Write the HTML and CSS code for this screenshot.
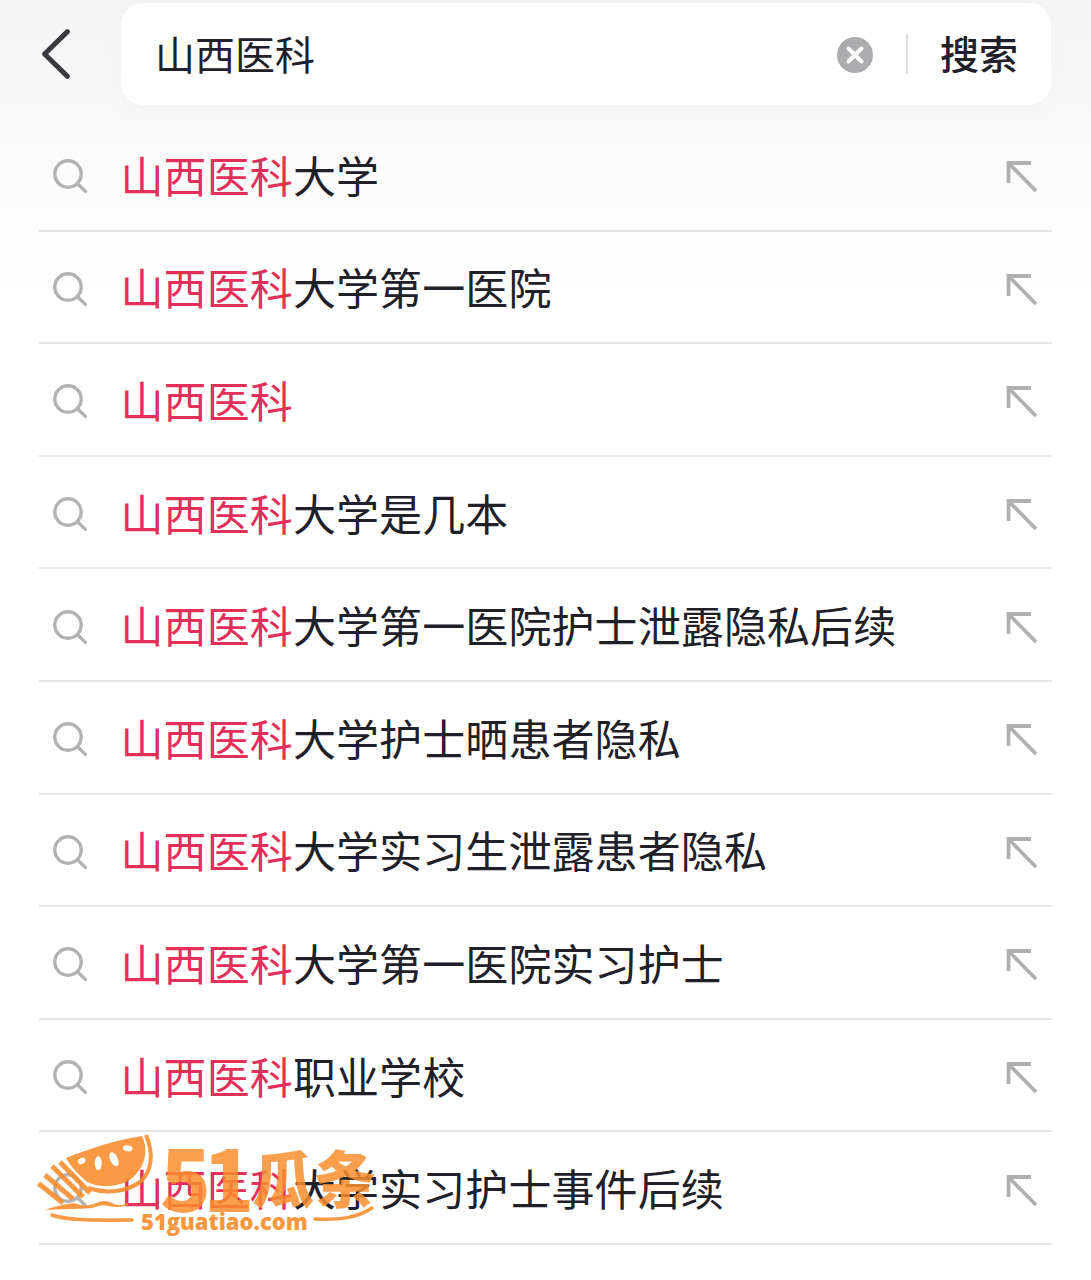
FILE: index.html
```html
<!DOCTYPE html>
<html lang="zh-CN">
<head>
<meta charset="utf-8">
<title>山西医科</title>
<link rel="stylesheet" href="styles.css">
</head>
<body>
<svg class="defs" width="0" height="0" aria-hidden="true">
  <symbol id="i-search" viewBox="0 0 36 36"><circle cx="16" cy="16" r="13.2" fill="none" stroke="#b2b2b3" stroke-width="3.4"/><path d="M26 26.2l7.4 7.2" fill="none" stroke="#b2b2b3" stroke-width="3.4" stroke-linecap="round"/></symbol>
  <symbol id="i-arrow" viewBox="0 0 34 34"><path d="M26 3H3.500v20M4 3.500L31 31" fill="none" stroke="#b0b0b1" stroke-width="3.800"/></symbol>
</svg>
<div class="page">
  <header class="top">
    <svg class="back" viewBox="0 0 30 50" aria-hidden="true"><path d="M26 3.500L4 25l22 21.500" fill="none" stroke="#3a3a40" stroke-width="4.800" stroke-linecap="round" stroke-linejoin="round"/></svg>
    <div class="box">
      <span class="query">山西医科</span>
      <svg class="clear" viewBox="0 0 36 36" aria-hidden="true"><circle cx="18" cy="18" r="18" fill="#acacae"/><path d="M11.500 11.500l13 13M24.500 11.500l-13 13" stroke="#fff" stroke-width="4" stroke-linecap="round"/></svg>
      <span class="divider"></span>
      <span class="go">搜索</span>
    </div>
  </header>
  <ul class="list">
    <li class="row"><svg class="ic"><use href="#i-search"/></svg><span class="txt"><em>山西医科</em>大学</span><svg class="ar"><use href="#i-arrow"/></svg></li>
    <li class="row"><svg class="ic"><use href="#i-search"/></svg><span class="txt"><em>山西医科</em>大学第一医院</span><svg class="ar"><use href="#i-arrow"/></svg></li>
    <li class="row"><svg class="ic"><use href="#i-search"/></svg><span class="txt"><em>山西医科</em></span><svg class="ar"><use href="#i-arrow"/></svg></li>
    <li class="row"><svg class="ic"><use href="#i-search"/></svg><span class="txt"><em>山西医科</em>大学是几本</span><svg class="ar"><use href="#i-arrow"/></svg></li>
    <li class="row"><svg class="ic"><use href="#i-search"/></svg><span class="txt"><em>山西医科</em>大学第一医院护士泄露隐私后续</span><svg class="ar"><use href="#i-arrow"/></svg></li>
    <li class="row"><svg class="ic"><use href="#i-search"/></svg><span class="txt"><em>山西医科</em>大学护士晒患者隐私</span><svg class="ar"><use href="#i-arrow"/></svg></li>
    <li class="row"><svg class="ic"><use href="#i-search"/></svg><span class="txt"><em>山西医科</em>大学实习生泄露患者隐私</span><svg class="ar"><use href="#i-arrow"/></svg></li>
    <li class="row"><svg class="ic"><use href="#i-search"/></svg><span class="txt"><em>山西医科</em>大学第一医院实习护士</span><svg class="ar"><use href="#i-arrow"/></svg></li>
    <li class="row"><svg class="ic"><use href="#i-search"/></svg><span class="txt"><em>山西医科</em>职业学校</span><svg class="ar"><use href="#i-arrow"/></svg></li>
    <li class="row"><svg class="ic"><use href="#i-search"/></svg><span class="txt"><em>山西医科</em>大学实习护士事件后续</span><svg class="ar"><use href="#i-arrow"/></svg></li>
  </ul>
  <div class="mark">
    <svg class="mark-art" viewBox="0 0 340 100" aria-hidden="true">
      <path d="M30 24C55 14 80 6 106 2c6 13 5 30-12 44-14 8-34 8-44 1C42 40 35 33 30 24z" fill="#f98f2f"/>
      <path d="M110 1c8 19 6 37-6 47-14 10-34 12-52 6" fill="none" stroke="#f98f2f" stroke-width="4"/>
      <ellipse cx="45.700" cy="27" rx="4" ry="3" fill="#fff" transform="rotate(-30 45.700 27)"/>
      <ellipse cx="62.300" cy="29.300" rx="3.500" ry="7" fill="#fff"/>
      <ellipse cx="78" cy="25.300" rx="3.800" ry="7.500" fill="#fff" transform="rotate(-25 78 25.300)"/>
      <ellipse cx="91.700" cy="14.300" rx="4.800" ry="3" fill="#fff" transform="rotate(10 91.700 14.300)"/>
      <path d="M24 28l30 31M16 32l31 31M9 41l28 24M2.500 49.500L27 69" stroke="#f98f2f" stroke-width="5" fill="none"/>
      <path d="M9 76C20 72 30 70 38 69c8 3 12 3 20 1 8-4 14-4 20 0 6 2 10 1 14-1v2c-8 3-14 2-20 1-6-2-10 0-16 2-8 1-30 1-47 2z" fill="#f98f2f"/>
      <path d="M16 81c14 5 34 5.500 80 5" fill="none" stroke="#f98f2f" stroke-width="3.500" stroke-linecap="round"/>
      <path d="M279 85c24 1 42-1 57-11" fill="none" stroke="#f98f2f" stroke-width="3.500" stroke-linecap="round"/>
    </svg>
    <span class="mark-name"><span class="mark-num">51</span>瓜条</span>
    <span class="mark-url">51guatiao.com</span>
  </div>
</div>
</body>
</html>
```
FILE: styles.css
```css
* { box-sizing: border-box; }
html, body { margin: 0; padding: 0; background: #fff; }
body { font-family: "Noto Sans CJK SC", "Noto Sans", sans-serif; }
.defs { position: absolute; }
.page {
  position: relative;
  width: 1091px;
  height: 1280px;
  overflow: hidden;
  background: linear-gradient(180deg, #f5f5f6 0, #f8f8f9 120px, #fdfdfd 210px, #fff 300px);
}
.top {
  display: flex;
  align-items: center;
  height: 108px;
  padding: 0 40px 0 39px;
}
.back { width: 34px; height: 52px; flex: none; margin-right: 48px; margin-top: -1px; }
.box {
  flex: 1;
  height: 102px;
  background: #fff;
  border-radius: 22px;
  display: flex;
  align-items: center;
  padding: 0 33px 0 34px;
  box-shadow: 0 6px 24px rgba(0, 0, 0, .025);
}
.query { flex: 1; font-size: 40px; line-height: 1; color: #1f2028; margin-top: -3px; }
.clear { width: 36px; height: 36px; flex: none; margin-top: 2px; }
.divider { width: 2px; height: 40px; background: #dcdcdd; margin: 0 32px 0 33px; flex: none; }
.go { font-size: 39px; line-height: 1; font-weight: 500; color: #1f2028; margin-top: -3px; }
.list { list-style: none; margin: 0; padding: 11px 39px 0; }
.row {
  display: flex;
  align-items: center;
  height: 112.6px;
  border-bottom: 2px solid #e6e6e7;
}
.ic { width: 36px; height: 36px; flex: none; margin-left: 13px; margin-top: 4px; }
.txt { flex: 1; margin-left: 32.500px; font-size: 43px; letter-spacing: .1px; line-height: 1; white-space: nowrap; color: #1f2028; }
.txt em { font-style: normal; color: #e2305a; }
.ar { width: 34px; height: 34px; flex: none; margin-right: 13px; margin-top: 6px; }
.mark { position: absolute; left: 36px; top: 1134px; width: 340px; height: 100px; color: #f98f2f; }
.mark-art { position: absolute; inset: 0; width: 340px; height: 100px; opacity: .9; }
.mark-name {
  position: absolute;
  left: 124px;
  top: 6px;
  display: flex;
  align-items: center;
  font-size: 62px;
  line-height: 72px;
  font-weight: 900;
  white-space: nowrap;
  opacity: .85;
}
.mark-num { font-size: 84px; line-height: 72px; letter-spacing: -8px; margin-right: 6px; }
.mark-url {
  position: absolute;
  left: 105px;
  top: 74px;
  font-family: "Open Sans", sans-serif;
  font-size: 22px;
  line-height: 26px;
  font-weight: 800;
  white-space: nowrap;
  opacity: .92;
}
```
